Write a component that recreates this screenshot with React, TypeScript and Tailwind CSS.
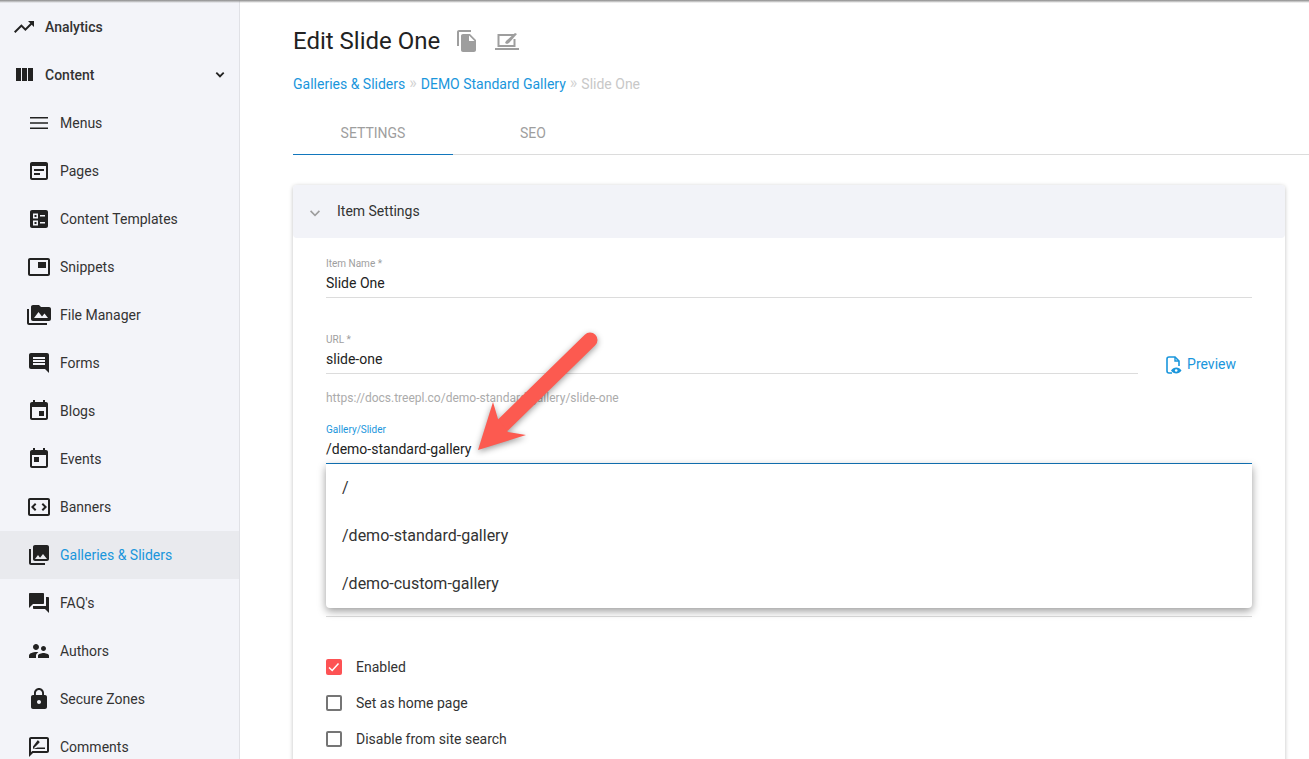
import type { ReactNode } from 'react';

const ICONS: Record<string, string> = {
  trending: 'M16 6l2.29 2.29-4.88 4.88-4-4L2 16.59 3.41 18l6-6 4 4 6.3-6.29L22 12V6z',
  week: 'M10 18h5V5h-5v13zm-6 0h5V5H4v13zM16 5v13h5V5h-5z',
  menu: 'M3 18h18v-1.500H3V18zm0-5.250h18v-1.500H3v1.500zM3 6v1.500h18V6H3z',
  pages: 'M19 3H5c-1.1 0-2 .9-2 2v14c0 1.1.9 2 2 2h14c1.1 0 2-.9 2-2V5c0-1.1-.9-2-2-2zm0 16H5V7h14v12zM7 10h10v2H7zm0 4h6v2H7z',
  templates: 'M19 3H5c-1.1 0-2 .9-2 2v14c0 1.1.9 2 2 2h14c1.1 0 2-.9 2-2V5c0-1.1-.9-2-2-2zM13 8h5v1.5h-5V8zm0 7h5v1.5h-5V15zM6 6.5h5v5H6v-5zm1.5 1.5v2h2V8h-2zM6 13.5h5v5H6v-5zm1.5 1.5v2h2v-2h-2z',
  snippets: 'M19 7h-8v6h8V7zm2-4H3c-1.1 0-2 .9-2 2v14c0 1.1.9 1.98 2 1.98h18c1.1 0 2-.88 2-1.98V5c0-1.1-.9-2-2-2zm0 16.01H3V4.98h18v14.03z',
  media: 'M2 6H0v5h.01L0 20c0 1.1.9 2 2 2h18v-2H2V6zm20-2h-8l-2-2H6c-1.1 0-1.99.9-1.99 2L4 16c0 1.1.9 2 2 2h16c1.1 0 2-.9 2-2V6c0-1.1-.9-2-2-2zM7 15l4.5-6 3.5 4.51 2.5-3.01L21 15H7z',
  forms: 'M21.99 4c0-1.1-.89-2-1.99-2H4c-1.1 0-2 .9-2 2v12c0 1.1.9 2 2 2h14l4 4-.01-18zM18 14H6v-2h12v2zm0-3H6V9h12v2zm0-3H6V6h12v2z',
  blogs: 'M17 12h-5v5h5v-5zM16 1v2H8V1H6v2H5c-1.11 0-1.99.9-1.99 2L3 19c0 1.1.89 2 2 2h14c1.1 0 2-.9 2-2V5c0-1.1-.9-2-2-2h-1V1h-2zm3 18H5V8h14v11z',
  events: 'M19 3h-1V1h-2v2H8V1H6v2H5c-1.11 0-1.99.9-1.99 2L3 19c0 1.1.89 2 2 2h14c1.1 0 2-.9 2-2V5c0-1.1-.9-2-2-2zm0 16H5V8h14v11zM7 10h5v5H7z',
  banners: 'M21 3H3c-1.1 0-2 .9-2 2v14c0 1.1.9 2 2 2h18c1.1 0 2-.9 2-2V5c0-1.1-.9-2-2-2zm0 16H3V5h18v14zM9.4 9.4 8 8l-4 4 4 4 1.4-1.4L6.8 12l2.6-2.6zm5.2 0L17.2 12l-2.6 2.6L16 16l4-4-4-4-1.4 1.4z',
  galleries: 'M22 16V4c0-1.1-.9-2-2-2H8c-1.1 0-2 .9-2 2v12c0 1.1.9 2 2 2h12c1.1 0 2-.9 2-2zm-11-4l2.03 2.71L16 11l4 5H8l3-4zM2 6v14c0 1.1.9 2 2 2h14v-2H4V6H2z',
  faq: 'M21 6h-2v9H6v2c0 .55.45 1 1 1h11l4 4V7c0-.55-.45-1-1-1zm-4 6V3c0-.55-.45-1-1-1H3c-.55 0-1 .45-1 1v14l4-4h10c.55 0 1-.45 1-1z',
  authors: 'M16.5 12c1.38 0 2.49-1.12 2.49-2.5S17.88 7 16.5 7C15.12 7 14 8.12 14 9.5s1.12 2.5 2.5 2.5zM9 11c1.66 0 2.99-1.34 2.99-3S10.66 5 9 5C7.34 5 6 6.34 6 8s1.34 3 3 3zm7.5 3c-1.83 0-5.5.92-5.5 2.75V19h11v-2.25c0-1.83-3.67-2.75-5.5-2.75zM9 13c-2.33 0-7 1.17-7 3.5V19h7v-2.25c0-.85.33-2.34 2.37-3.47C10.5 13.1 9.66 13 9 13z',
  lock: 'M18 8h-1V6c0-2.76-2.24-5-5-5S7 3.24 7 6v2H6c-1.1 0-2 .9-2 2v10c0 1.1.9 2 2 2h12c1.1 0 2-.9 2-2V10c0-1.1-.9-2-2-2zm-6 9c-1.1 0-2-.9-2-2s.9-2 2-2 2 .9 2 2-.9 2-2 2zm3.1-9H8.9V6c0-1.71 1.39-3.1 3.1-3.1 1.71 0 3.1 1.39 3.1 3.1v2z',
  comments: 'M20 2H4c-1.1 0-2 .9-2 2v18l4-4h14c1.1 0 2-.9 2-2V4c0-1.1-.9-2-2-2zm0 14H5.2L4 17.2V4h16v12zM6 14h12v-1.5h-7.5L6 14zm0-2.5V14l6.5-6.5c.2-.2.2-.5 0-.7l-1.3-1.3c-.2-.2-.5-.2-.7 0L6 11.5z',
  copy: 'M16 1H4c-1.1 0-2 .9-2 2v14h2V3h12V1zm-1 4l6 6v10c0 1.1-.9 2-2 2H7.99C6.89 23 6 22.1 6 21l.01-14c0-1.1.89-2 1.99-2h7zm-1 7h5.5L14 6.5V12z',
};

const SUB_ITEMS = [
  ['menu', 'Menus'],
  ['pages', 'Pages'],
  ['templates', 'Content Templates'],
  ['snippets', 'Snippets'],
  ['media', 'File Manager'],
  ['forms', 'Forms'],
  ['blogs', 'Blogs'],
  ['events', 'Events'],
  ['banners', 'Banners'],
  ['galleries', 'Galleries & Sliders'],
  ['faq', "FAQ's"],
  ['authors', 'Authors'],
  ['lock', 'Secure Zones'],
  ['comments', 'Comments'],
];

function Icon({ name, className = 'text-[#222]' }: { name: string; className?: string }) {
  return (
    <svg viewBox="0 0 24 24" className={`h-6 w-6 shrink-0 fill-current ${className}`}>
      <path d={ICONS[name]} />
    </svg>
  );
}

function Sidebar() {
  return (
    <aside className="w-[240px] shrink-0 border-r border-[#e0e1e6] bg-[#f3f4f9] pt-[3px] text-[14px] text-[#333]">
      <div className="flex h-12 items-center pl-3 font-medium">
        <Icon name="trending" />
        <span className="ml-[9px]">Analytics</span>
      </div>
      <div className="flex h-12 items-center pl-3 pr-[11px] font-medium">
        <Icon name="week" />
        <span className="ml-[9px] flex-1">Content</span>
        <svg viewBox="0 0 24 24" className="h-4 w-4 fill-[#222]">
          <path d="M16.59 7.59 12 12.17 7.41 7.59 5.5 9.5 12 16l6.5-6.5z" />
        </svg>
      </div>
      {SUB_ITEMS.map(([icon, label]) => {
        const active = label === 'Galleries & Sliders';
        return (
          <div key={label} className={`flex h-12 items-center pl-[27px] ${active ? 'bg-[#e9eaee] text-[#1a96dc]' : ''}`}>
            <Icon name={icon} />
            <span className="ml-[9px]">{label}</span>
          </div>
        );
      })}
    </aside>
  );
}

function Field({ label, value, active }: { label: string; value: string; active?: boolean }) {
  return (
    <div className={`border-b pb-[4px] ${active ? 'border-[#1277bd]' : 'border-[#dcdcdc]'}`}>
      <div className={`text-[10px] leading-[12px] ${active ? 'text-[#1a96dc]' : 'text-[#9e9e9e]'}`}>{label}</div>
      <div className="mt-[3px] text-[14px] leading-[20px] text-[#222]">{value}</div>
    </div>
  );
}

function Check({ checked, children }: { checked?: boolean; children: ReactNode }) {
  return (
    <div className="flex h-9 items-center text-[14px] text-[#333]">
      {checked ? (
        <span className="flex h-4 w-4 items-center justify-center rounded-[2px] bg-[#fd5254]">
          <svg viewBox="0 0 16 16" className="h-4 w-4 fill-none stroke-white stroke-[1.5]">
            <path d="M3 8.5l3.2 3L12.5 4.5" />
          </svg>
        </span>
      ) : (
        <span className="h-4 w-4 rounded-[2px] border-2 border-[#757575]" />
      )}
      <span className="ml-[14px]">{children}</span>
    </div>
  );
}

function Sep() {
  return <span className="mx-[4px] mt-[-3px] text-[16px] leading-[20px] text-[#d2d2d2]">»</span>;
}

function Arrow() {
  return (
    <svg
      viewBox="0 0 140 140"
      className="absolute left-[465px] top-[325px] h-[140px] w-[140px] drop-shadow-[0_2px_3px_rgba(0,0,0,0.4)]"
    >
      <path d="M125 15 L38 100" className="fill-none stroke-[#fc5a50] stroke-[15]" strokeLinecap="round" />
      <path d="M13 125 L28 77 L33 94 L43 107 L61 110 Z" className="fill-[#fc5a50]" />
    </svg>
  );
}

export default function App() {
  return (
    <div className="relative flex h-[759px] w-[1309px] overflow-hidden bg-white font-['Roboto',sans-serif]">
      <Sidebar />

      <main className="min-w-0 flex-1 pl-[53px]">
        <div className="flex h-[81px] items-center pt-[1px]">
          <h1 className="text-[24px] font-normal text-[#222]">Edit Slide One</h1>
          <Icon name="copy" className="ml-[15px] text-[#9e9e9e]" />
          <svg viewBox="0 0 24 18" className="ml-[16px] h-[18px] w-[24px] fill-none stroke-[#9e9e9e]">
            <path d="M19 3H3.5v11h16V7" strokeWidth="2" />
            <path d="M0 17h24" strokeWidth="2" />
            <path d="M10 11l1-2 9-8 2 1-8 9-2 1z" className="fill-[#9e9e9e]" strokeWidth="0" />
          </svg>
        </div>

        <div className="mt-[-7px] flex h-[20px] items-center text-[14px] text-[#1a96dc]">
          <span>Galleries &amp; Sliders</span>
          <Sep />
          <span>DEMO Standard Gallery</span>
          <Sep />
          <span className="text-[#c8c8c8]">Slide One</span>
        </div>

        <div className="mt-[15px] flex h-[46px] border-b border-[#dcdcdc] text-[14px] text-[#9e9e9e]">
          <div className="flex h-[46px] w-[160px] items-center justify-center border-b border-[#1277bd] pt-[4px]">SETTINGS</div>
          <div className="flex w-[160px] items-center justify-center pt-[4px]">SEO</div>
        </div>

        <section className="mt-[30px] w-[992px] rounded-[4px] bg-white pb-[40px] shadow-[0_1px_4px_rgba(0,0,0,0.25)]">
          <div className="flex h-[53px] items-center rounded-[4px] bg-[#f2f3f8] pl-[12px] text-[14px] text-[#333]">
            <svg viewBox="0 0 24 24" className="mt-[4px] h-5 w-5 fill-[#9e9e9e]">
              <path d="M16.59 7.59 12 12.17 7.41 7.59 6 9l6 6 6-6z" />
            </svg>
            <span className="ml-[12px]">Item Settings</span>
          </div>

          <div className="relative px-[33px] pt-[20px]">
            <Field label="Item Name *" value="Slide One" />

            <div className="mt-[36px] flex h-[40px] items-start">
              <div className="flex-1">
                <Field label="URL *" value="slide-one" />
              </div>
              <div className="ml-[28px] mr-[16px] mt-[20px] flex items-center text-[14px] text-[#1a96dc]">
                <svg viewBox="0 0 16 18" className="h-[18px] w-[16px] fill-none stroke-[#1a96dc]">
                  <path d="M6 17H3a2 2 0 0 1-2-2V3a2 2 0 0 1 2-2h6l4 4v5" strokeWidth="1.6" />
                  <path d="M9 1v4h4" strokeWidth="1.4" />
                  <path d="M5 14.5c2.500-4 8-4 10.500 0-2.500 4-8 4-10.500 0z" className="fill-[#1a96dc]" strokeWidth="0" />
                  <circle cx="10.200" cy="14.500" r="1.300" className="fill-white" strokeWidth="0" />
                </svg>
                <span className="ml-[5px]">Preview</span>
              </div>
            </div>

            <div className="mt-[17px] text-[12px] leading-[14px] text-[#ababab]">
              https://docs.treepl.co/demo-standard-gallery/slide-one
            </div>

            <div className="relative mt-[19px]">
              <Field label="Gallery/Slider" value="/demo-standard-gallery" active />
              <ul className="absolute left-0 right-0 top-full z-10 rounded-b-[4px] bg-white text-[16px] text-[#333] shadow-[0_3px_8px_rgba(0,0,0,0.4)]">
                <li className="flex h-12 items-center pl-4">/</li>
                <li className="flex h-12 items-center pl-4">/demo-standard-gallery</li>
                <li className="flex h-12 items-center pl-4">/demo-custom-gallery</li>
              </ul>
            </div>

            <div className="mt-[152px] border-b border-[#dcdcdc]" />

            <div className="mt-[32px]">
              <Check checked>Enabled</Check>
              <Check>Set as home page</Check>
              <Check>Disable from site search</Check>
            </div>
          </div>
        </section>
      </main>

      <div className="absolute inset-x-0 top-0 h-[3px] bg-gradient-to-b from-[#8a8a8a] to-transparent" />
      <Arrow />
    </div>
  );
}
